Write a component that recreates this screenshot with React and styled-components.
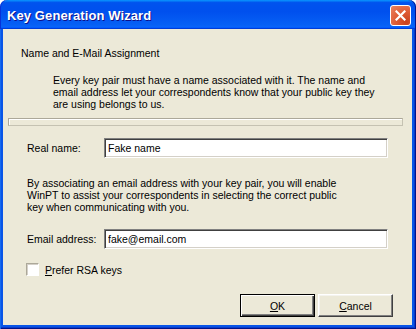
import React from "react";
import styled, { createGlobalStyle } from "styled-components";

const Global = createGlobalStyle`
  html, body { margin: 0; padding: 0; background: #ffffff; }
  body { font-family: "Liberation Sans", Arial, sans-serif; }
  * { box-sizing: border-box; }
`;

const Window = styled.div`
  width: 416px;
  height: 329px;
  display: flex;
  flex-direction: column;
`;

const TitleBar = styled.div`
  height: 29px;
  flex: none;
  display: flex;
  align-items: center;
  justify-content: space-between;
  padding: 0 5px 0 7px;
  border-radius: 7px 7px 0 0;
  background: linear-gradient(180deg, #0997ff 0%, #0053ee 9%, #0050ee 40%, #0660f5 85%, #0a64f8 92%, #005bff 95%, #003dd7 97%, #003dd7 100%);
  box-shadow: inset 1px 0 #0831d9, inset -1px 0 #00138c;
`;

const Title = styled.span`
  color: #ffffff;
  font-family: "Liberation Sans", Arial, sans-serif;
  font-weight: bold;
  font-size: 13px;
  letter-spacing: 0.1px;
  text-shadow: 1px 1px #0f1089;
  margin-top: 1px;
`;

const CloseButton = styled.div`
  width: 21px;
  height: 21px;
  border: 1px solid #ffffff;
  border-radius: 3px;
  background: radial-gradient(circle at 80% 85%, #c8421f 0%, #de5a33 45%, #ea8461 100%);
  display: flex;
  align-items: center;
  justify-content: center;
  margin-top: 2px;
`;

const Frame = styled.div`
  flex: 1;
  display: flex;
  padding: 0 4px 4px 3px;
  background: #0855e8;
  box-shadow: inset 1px 0 #166aee, inset -1px -1px #00138c, inset -2px -2px #0a3bc8;
`;

const Content = styled.div`
  flex: 1;
  background: #ece9d8;
  display: flex;
  flex-direction: column;
  padding: 18px 0 8px 0;
  font-size: 10.5px;
  color: #000000;
`;

const Heading = styled.div`
  margin-left: 18px;
  line-height: 13px;
  height: 13px;
`;

const Paragraph = styled.div`
  margin-left: ${(p) => p.$indent}px;
  margin-top: ${(p) => p.$top}px;
  line-height: 12px;
  white-space: nowrap;
`;

const Separator = styled.div`
  margin: 8px 9px 0 5px;
  height: 8px;
  border: 1px solid #aca899;
  border-right-color: #c5c2b2;
  border-bottom-color: #c5c2b2;
  box-shadow: inset 1px 1px #ffffff;
`;

const FieldRow = styled.div`
  display: flex;
  align-items: center;
  margin: ${(p) => p.$top}px 24px 0 24px;
  height: 20px;
`;

const Label = styled.label`
  width: 77px;
  flex: none;
`;

const Input = styled.input`
  flex: 1;
  height: 20px;
  font-family: "Liberation Sans", Arial, sans-serif;
  font-size: 10.5px;
  color: #000;
  padding: 0 2px 0 3px;
  margin: 0;
  background: #ffffff;
  border-style: solid;
  border-width: 1px;
  border-color: #808080 #ffffff #ffffff #808080;
  box-shadow: inset 1px 1px #404040, inset -1px -1px #d4d0c8;
  outline: none;
`;

const CheckRow = styled.label`
  display: flex;
  align-items: center;
  gap: 6px;
  margin: 14px 0 0 23px;
  height: 13px;
`;

const CheckBox = styled.span`
  width: 13px;
  height: 13px;
  flex: none;
  background: #ffffff;
  border-style: solid;
  border-width: 1px;
  border-color: #aca899 #ffffff #ffffff #aca899;
  box-shadow: inset 1px 1px #d4d0c8;
`;

const ButtonRow = styled.div`
  display: flex;
  justify-content: flex-end;
  gap: 3px;
  margin: 18px 19px 0 0;
`;

const Button = styled.div`
  width: 75px;
  height: 23px;
  display: flex;
  align-items: center;
  justify-content: center;
  background: #ece9d8;
  border-style: solid;
  border-width: 1px;
  border-color: ${(p) => (p.$default ? "#000000" : "#ffffff #404040 #404040 #ffffff")};
  box-shadow: ${(p) =>
    p.$default
      ? "inset 1px 1px #ffffff, inset -1px -1px #404040, inset -2px -2px #808080"
      : "inset -1px -1px #808080, inset 1px 1px #f4f3ee"};
  font-size: 10.5px;
`;

const U = styled.span`
  text-decoration: underline;
  text-underline-offset: 1px;
`;

export default function App() {
  return (
    <>
      <Global />
      <Window>
        <TitleBar>
          <Title>Key Generation Wizard</Title>
          <CloseButton>
            <svg width="11" height="11" viewBox="0 0 11 11">
              <path d="M1.5 1.5 L9.5 9.5 M9.5 1.5 L1.5 9.5" stroke="#ffffff" strokeWidth="2.2" strokeLinecap="square" />
            </svg>
          </CloseButton>
        </TitleBar>
        <Frame>
          <Content>
            <Heading>Name and E-Mail Assignment</Heading>
            <Paragraph $indent={50} $top={14}>
              Every key pair must have a name associated with it. The name and
              <br />
              email address let your correspondents know that your public key they
              <br />
              are using belongs to us.
            </Paragraph>
            <Separator />
            <FieldRow $top={12}>
              <Label>Real name:</Label>
              <Input defaultValue="Fake name" />
            </FieldRow>
            <Paragraph $indent={24} $top={19}>
              By associating an email address with your key pair, you will enable
              <br />
              WinPT to assist your correspondents in selecting the correct public
              <br />
              key when communicating with you.
            </Paragraph>
            <FieldRow $top={16}>
              <Label>Email address:</Label>
              <Input defaultValue="fake@email.com" />
            </FieldRow>
            <CheckRow>
              <CheckBox />
              <span>
                <U>P</U>refer RSA keys
              </span>
            </CheckRow>
            <ButtonRow>
              <Button $default>
                <span>
                  <U>O</U>K
                </span>
              </Button>
              <Button>
                <span>
                  <U>C</U>ancel
                </span>
              </Button>
            </ButtonRow>
          </Content>
        </Frame>
      </Window>
    </>
  );
}
